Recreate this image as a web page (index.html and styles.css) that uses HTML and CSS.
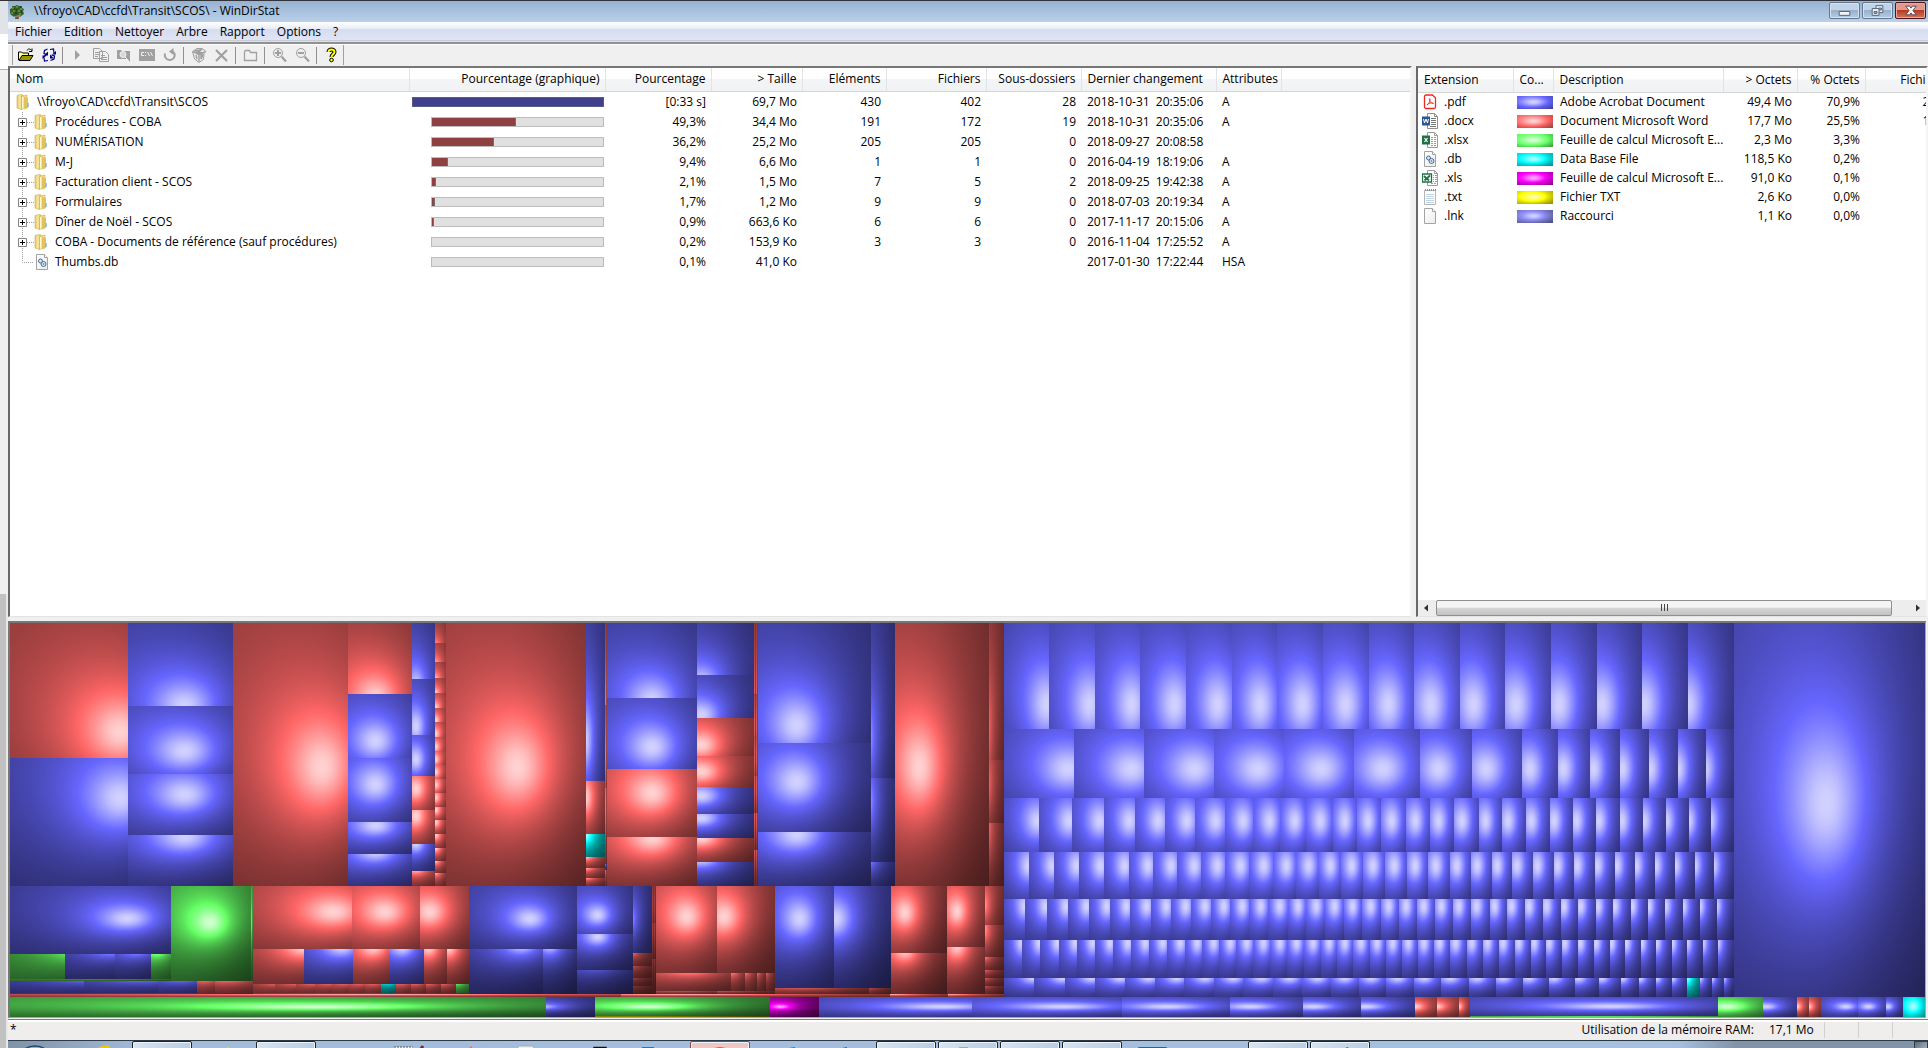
FILE: index.html
```html
<!DOCTYPE html>
<html lang="fr">
<head>
<meta charset="utf-8">
<title>\\froyo\CAD\ccfd\Transit\SCOS\ - WinDirStat</title>
<link rel="stylesheet" href="styles.css">
</head>
<body>
<svg class="defs" width="0" height="0" aria-hidden="true">
  <defs>
    <linearGradient id="gold" x1="0" x2="1"><stop offset="0" stop-color="#e3c662"/><stop offset=".5" stop-color="#f8e9a4"/><stop offset="1" stop-color="#d9b84e"/></linearGradient>
    <linearGradient id="sheet" x1="0" x2="1" y2="1"><stop offset="0" stop-color="#fff"/><stop offset="1" stop-color="#ececec"/></linearGradient>
    <symbol id="folder" viewBox="0 0 14 16">
      <path d="M1 1.500 5 .5 7 1v13l-1.500 1.500L1 14z" fill="url(#gold)" stroke="#cfae4d" stroke-width=".6"/>
      <path d="M5.500 2.500 11 1v12.500L5.500 15.500z" fill="#f5e39a" stroke="#c9a545" stroke-width=".6"/>
      <path d="M8 2.500 12 4v10l-4 1.500z" fill="#e2c25a"/>
      <path d="M6.500 3v11.500" stroke="#fff8d6"/>
      <path d="M12 9v4" stroke="#7db4dc" stroke-width="1.400"/>
    </symbol>
    <symbol id="doc-db" viewBox="0 0 16 16">
      <path d="M2.500.5h8l3 3v12h-11z" fill="url(#sheet)" stroke="#a3a3a3"/><path d="M10.500.5v3h3" fill="#fff" stroke="#a3a3a3"/>
      <circle cx="6.500" cy="7" r="2" fill="#dbe8f4" stroke="#3f6d9f"/><circle cx="9.500" cy="10" r="2.500" fill="#dbe8f4" stroke="#3f6d9f"/><circle cx="9.500" cy="10" r=".8" fill="#3f6d9f"/>
    </symbol>
    <symbol id="doc-pdf" viewBox="0 0 16 16">
      <path d="M4 1h6.500L13.500 4v9a1.500 1.500 0 0 1-1.500 1.500H4A1.500 1.500 0 0 1 2.500 13V2.500A1.500 1.500 0 0 1 4 1z" fill="#fff" stroke="#ee2a20" stroke-width="1.300"/>
      <path d="M5 11c2-1 3.500-4 3-6.300 -.8-.3-.8 1 0 2.500.6 1.300 1.800 2.500 3.200 2.400.8-.3-.2-1-1.700-.8C7.500 9 5.500 10 5 11z" fill="none" stroke="#ee2a20" stroke-width=".9"/>
    </symbol>
    <symbol id="doc-word" viewBox="0 0 16 16">
      <path d="M5.500.5h7l3 3v12h-10z" fill="#fff" stroke="#8f8f8f"/><path d="M12.500.5v3h3" fill="none" stroke="#8f8f8f"/>
      <path d="M9 5.500h5M9 7.500h5M9 9.500h5M9 11.500h5M8 13.500h6" stroke="#777"/>
      <path d="M0 3.500h8v9H0z" fill="#2a5699"/><path d="M1.500 6l1 4 1.500-4 1.500 4 1-4" fill="none" stroke="#fff"/>
    </symbol>
    <symbol id="doc-xlsx" viewBox="0 0 16 16">
      <path d="M5.500.5h7l3 3v12h-10z" fill="#fff" stroke="#9a9a9a"/><path d="M12.500.5v3h3" fill="none" stroke="#9a9a9a"/>
      <path d="M9 5.500h2m1 0h2M9 7.500h2m1 0h2M9 9.500h2m1 0h2M9 11.500h2m1 0h2M9 13.500h2m1 0h2" stroke="#6fb58c"/>
      <path d="M0 3.500h8v9H0z" fill="#1f7244"/><path d="M2.500 6l3 4m0-4-3 4" stroke="#fff" stroke-width="1.200"/>
    </symbol>
    <symbol id="doc-xls" viewBox="0 0 16 16">
      <path d="M5.500.5h7l3 3v12h-10z" fill="#fff" stroke="#9a9a9a"/><path d="M12.500.5v3h3" fill="none" stroke="#9a9a9a"/>
      <path d="M11 5.500h1m1 0h2M11 7.500h1m1 0h2M11 9.500h1m1 0h2M11 11.500h1m1 0h2M9 13.500h2m1 0h2" stroke="#6fb58c"/>
      <path d="M.5 4h9v8h-9z" fill="#fff" stroke="#1f7244" stroke-width="1.300"/><path d="M2 6l5 4.500M8 5.500 2.500 10.500" stroke="#1f7244" stroke-width="1.800"/>
    </symbol>
    <symbol id="doc-txt" viewBox="0 0 16 16">
      <path d="M2.500 1.500h11v14h-11z" fill="#fdfdfd" stroke="#b5b5b5"/><path d="M3 1h11" stroke="#8c8c8c" stroke-dasharray="1 1" stroke-width="2"/>
      <path d="M4 5.500h8M4 7.500h8M4 9.500h8M4 11.500h8M4 13.500h8" stroke="#c3d4e2"/>
    </symbol>
    <symbol id="doc-lnk" viewBox="0 0 16 16">
      <path d="M2.500.5h8l3 3v12h-11z" fill="url(#sheet)" stroke="#a3a3a3"/><path d="M10.500.5v3h3" fill="#fff" stroke="#a3a3a3"/>
    </symbol>
    <symbol id="toggle" viewBox="0 0 24 20">
      <path d="M12.500 0v20M17 10.500h7" stroke="#a0a0a0" stroke-dasharray="1 1"/>
      <path d="M8.500 6.500h8v8h-8z" fill="#fff" stroke="#848484"/><path d="M10 10.500h5M12.500 8v5" stroke="#000"/>
    </symbol>
    <symbol id="lens" viewBox="0 0 16 16">
      <circle cx="6" cy="6" r="4.500" fill="#eee" stroke="#a0a0a0"/><path d="M9.500 9.500l4.500 5" stroke="#a0a0a0" stroke-width="2.200"/><path d="M3 6h6" stroke="#a0a0a0" stroke-width="2"/>
    </symbol>
  </defs>
</svg>
<div class="desktop">
  <div class="behind"><div class="behind-tab"></div><div class="behind-page"></div><div class="behind-scroll"></div><div class="behind-thumb"></div></div>
  <div class="window">
    <header class="titlebar">
      <svg class="app-icon" viewBox="0 0 16 16"><path d="M7 8h2l1 7H6z" fill="#6b563b"/><path d="M4 12h2l1-2h2l1 2h2v1H4z" fill="#8c8468"/><path d="M1 5l2-1 0-2 3 0 2-1 2 1 3 0 0 2 2 1-1 2 1 3-3 2-3-1-2 1-3 0-2-1-1-2z" fill="#33602a"/><path d="M3 4h2m2-1h2m2 2h2M4 7h2m3 0h2M2 9h2m6 1h2" stroke="#7d8f47" stroke-width="1.500"/><path d="M5 5h1m5-2h1M7 6h1M6 9h2m4-1h1" stroke="#16340f" stroke-width="1.500"/></svg>
      <h1>\\froyo\CAD\ccfd\Transit\SCOS\ - WinDirStat</h1>
      <div class="window-buttons">
        <button aria-label="Réduire"><svg viewBox="0 0 30 15"><path d="M9.500 8.500h11v4h-11z" fill="#f4f4f4" stroke="#51617a"/></svg></button>
        <button aria-label="Restaurer"><svg viewBox="0 0 30 15"><path d="M13.500 2.500h7v7h-7z" fill="#f4f4f4" stroke="#51617a"/><path d="M16 5h3v2h-3z" fill="#9fb9d5" stroke="#51617a"/><path d="M9.500 5.500h7v7h-7z" fill="#f4f4f4" stroke="#51617a"/><path d="M11.500 8.500h3v2h-3z" fill="#9fb9d5" stroke="#51617a"/></svg></button>
        <button class="close" aria-label="Fermer"><svg viewBox="0 0 30 15"><path d="M10 3h4l1.500 2L17 3h4l-3.500 4.500L21 12h-4l-1.500-2-1.500 2h-4l3.500-4.500z" fill="#f4f4f4" stroke="#5a4a55"/></svg></button>
      </div>
    </header>
    <nav class="menubar">
      <button>Fichier</button><button>Edition</button><button>Nettoyer</button><button>Arbre</button><button>Rapport</button><button>Options</button><button>?</button>
    </nav>
    <div class="toolbar">
      <div class="tools">
        <button aria-label="Ouvrir"><svg viewBox="0 0 16 16"><path d="M.5 13V5h3l1 1h6v2" fill="#ffffa0" stroke="#000"/><path d="M1 13.500 4 8.500h11l-3 5z" fill="#9a9a00" stroke="#000"/><path d="M9 3.500c1-2 3-2 4.500 0M14 1.500v3h-3" fill="none" stroke="#000"/></svg></button>
        <button aria-label="Actualiser"><svg viewBox="0 0 16 16"><path d="M6.500 2 3.500 3.500 3 6.500 6 7.500M9 2.500l3.500-.5L13 6M9.500 13.500l3.500-1.500.5-3-3-1M7 13.500l-3.500.5L3 10.500" fill="none" stroke="#000080" stroke-width="1.200"/><path d="M7 4.500v4H3zM15 4v3.500h-4zM9 7.500v4h4zM1.500 12V8.500h4z" fill="#000080"/></svg></button>
        <span class="sep"></span>
        <button aria-label="Reprendre"><svg viewBox="0 0 16 16"><path d="M5 3l5 5-5 5z" fill="#a0a0a0"/></svg></button>
        <button aria-label="Copier"><svg viewBox="0 0 16 16"><path d="M.5 1.500h6l3 3v7h-9zM6.500 4.500h6l3 3v7h-9z" fill="#f0f0f0" stroke="#a0a0a0"/><path d="M2 5.500h4M2 7.500h4M2 9.500h3M8 8.500h4M8 10.500h6M8 12.500h6" stroke="#a0a0a0"/></svg></button>
        <button aria-label="Explorer"><svg viewBox="0 0 16 16"><path d="M1 3h4l1 1h8v11l-3-3H1z" fill="#a0a0a0"/><circle cx="7" cy="7.500" r="3" fill="#d8d8d8" stroke="#f0f0f0"/><path d="M9 10l4 4" stroke="#f0f0f0"/></svg></button>
        <button aria-label="Invite de commandes"><svg viewBox="0 0 16 16"><path d="M0 2h16v12H0z" fill="#a0a0a0"/><path d="M5 5.500H2.500v3H5M6.500 5v1m0 2v1M8.500 5l2 4m1-4 2 4" fill="none" stroke="#f0f0f0"/></svg></button>
        <button aria-label="Rafraîchir"><svg viewBox="0 0 16 16"><path d="M3 6.500a5 5 0 1 0 9.500 0L10 4" fill="none" stroke="#a0a0a0" stroke-width="2"/><path d="M7 4.500 11.500 1v7z" fill="#a0a0a0"/></svg></button>
        <span class="sep"></span>
        <button aria-label="Corbeille"><svg viewBox="0 0 16 16"><path d="M1.500 4.500 6 1.500l5 0 4 3-2 2-.5 6L8 15.500 3.500 12z" fill="#e8e8e8" stroke="#a0a0a0"/><path d="M2 4.500 8 7.500l6-2.500M8 7.500v7M5 8l1 4M4 3l4 2 3-3M10 8l2 0-2 4z" stroke="#a0a0a0" stroke-width="1.400" fill="#a0a0a0"/></svg></button>
        <button aria-label="Supprimer"><svg viewBox="0 0 16 16"><path d="M2 3l11 11M13 3 2 14" stroke="#a0a0a0" stroke-width="2.200"/></svg></button>
        <span class="sep"></span>
        <button aria-label="Dossier parent"><svg viewBox="0 0 16 16"><path d="M1.500 13.500v-9l1-1h4l1 2h6v8z" fill="#f0f0f0" stroke="#a0a0a0" stroke-width="1.300"/></svg></button>
        <span class="sep"></span>
        <button aria-label="Zoom avant"><svg viewBox="0 0 16 16"><use href="#lens"/><path d="M6 3v6" stroke="#a0a0a0" stroke-width="2"/></svg></button>
        <button aria-label="Zoom arrière"><svg viewBox="0 0 16 16"><use href="#lens"/></svg></button>
        <span class="sep"></span>
        <button aria-label="Aide"><svg viewBox="0 0 16 16"><path d="M4.500 5C4.500 1.500 10.500 1.500 10.500 5c0 2-3 2.500-3 5" fill="none" stroke="#000" stroke-width="4"/><path d="M4.500 5C4.500 1.500 10.500 1.500 10.500 5c0 2-3 2.500-3 5" fill="none" stroke="#ff0" stroke-width="2"/><circle cx="7.500" cy="13" r="1.800" fill="#ff0" stroke="#000"/></svg></button>
      </div>
    </div>
    <main class="panes">
      <section class="pane">
        <table class="list tree">
          <colgroup><col class="w-name"><col class="w-graph"><col class="w-pct"><col class="w-size"><col class="w-items"><col class="w-files"><col class="w-subs"><col class="w-date"><col class="w-attr"><col></colgroup>
          <thead><tr><th>Nom</th><th class="num">Pourcentage (graphique)</th><th class="num">Pourcentage</th><th class="num">&gt; Taille</th><th class="num">Eléments</th><th class="num">Fichiers</th><th class="num">Sous-dossiers</th><th>Dernier changement</th><th>Attributes</th><th></th></tr></thead>
          <tbody>
            <tr class="root"><td><div class="name"><svg class="folder"><use href="#folder"/></svg>\\froyo\CAD\ccfd\Transit\SCOS</div></td><td><div class="bar total"></div></td><td class="num">[0:33 s]</td><td class="num">69,7 Mo</td><td class="num">430</td><td class="num">402</td><td class="num">28</td><td>2018-10-31&nbsp; 20:35:06</td><td>A</td><td></td></tr>
            <tr><td><div class="name"><button class="toggle" aria-label="Développer"><svg><use href="#toggle"/></svg></button><svg class="folder"><use href="#folder"/></svg>Procédures - COBA</div></td><td><div class="bar"><i style="width:49.3%"></i></div></td><td class="num">49,3%</td><td class="num">34,4 Mo</td><td class="num">191</td><td class="num">172</td><td class="num">19</td><td>2018-10-31&nbsp; 20:35:06</td><td>A</td><td></td></tr>
            <tr><td><div class="name"><button class="toggle" aria-label="Développer"><svg><use href="#toggle"/></svg></button><svg class="folder"><use href="#folder"/></svg>NUMÉRISATION</div></td><td><div class="bar"><i style="width:36.2%"></i></div></td><td class="num">36,2%</td><td class="num">25,2 Mo</td><td class="num">205</td><td class="num">205</td><td class="num">0</td><td>2018-09-27&nbsp; 20:08:58</td><td></td><td></td></tr>
            <tr><td><div class="name"><button class="toggle" aria-label="Développer"><svg><use href="#toggle"/></svg></button><svg class="folder"><use href="#folder"/></svg>M-J</div></td><td><div class="bar"><i style="width:9.4%"></i></div></td><td class="num">9,4%</td><td class="num">6,6 Mo</td><td class="num">1</td><td class="num">1</td><td class="num">0</td><td>2016-04-19&nbsp; 18:19:06</td><td>A</td><td></td></tr>
            <tr><td><div class="name"><button class="toggle" aria-label="Développer"><svg><use href="#toggle"/></svg></button><svg class="folder"><use href="#folder"/></svg>Facturation client - SCOS</div></td><td><div class="bar"><i style="width:2.1%"></i></div></td><td class="num">2,1%</td><td class="num">1,5 Mo</td><td class="num">7</td><td class="num">5</td><td class="num">2</td><td>2018-09-25&nbsp; 19:42:38</td><td>A</td><td></td></tr>
            <tr><td><div class="name"><button class="toggle" aria-label="Développer"><svg><use href="#toggle"/></svg></button><svg class="folder"><use href="#folder"/></svg>Formulaires</div></td><td><div class="bar"><i style="width:1.7%"></i></div></td><td class="num">1,7%</td><td class="num">1,2 Mo</td><td class="num">9</td><td class="num">9</td><td class="num">0</td><td>2018-07-03&nbsp; 20:19:34</td><td>A</td><td></td></tr>
            <tr><td><div class="name"><button class="toggle" aria-label="Développer"><svg><use href="#toggle"/></svg></button><svg class="folder"><use href="#folder"/></svg>Dîner de Noël - SCOS</div></td><td><div class="bar"><i style="width:0.9%"></i></div></td><td class="num">0,9%</td><td class="num">663,6 Ko</td><td class="num">6</td><td class="num">6</td><td class="num">0</td><td>2017-11-17&nbsp; 20:15:06</td><td>A</td><td></td></tr>
            <tr><td><div class="name"><button class="toggle" aria-label="Développer"><svg><use href="#toggle"/></svg></button><svg class="folder"><use href="#folder"/></svg>COBA - Documents de référence (sauf procédures)</div></td><td><div class="bar"></div></td><td class="num">0,2%</td><td class="num">153,9 Ko</td><td class="num">3</td><td class="num">3</td><td class="num">0</td><td>2016-11-04&nbsp; 17:25:52</td><td>A</td><td></td></tr>
            <tr><td><div class="name"><svg class="branch" viewBox="0 0 24 20"><path d="M12.500 0v10.500H24" fill="none" stroke="#a0a0a0" stroke-dasharray="1 1"/></svg><svg class="file"><use href="#doc-db"/></svg>Thumbs.db</div></td><td><div class="bar"></div></td><td class="num">0,1%</td><td class="num">41,0 Ko</td><td></td><td></td><td></td><td>2017-01-30&nbsp; 17:22:44</td><td>HSA</td><td></td></tr>
          </tbody>
        </table>
      </section>
      <section class="pane">
        <div class="clip">
        <table class="list types">
          <colgroup><col class="w-ext"><col class="w-color"><col class="w-desc"><col class="w-bytes"><col class="w-share"><col class="w-count"></colgroup>
          <thead><tr><th>Extension</th><th>Co...</th><th>Description</th><th class="num">&gt; Octets</th><th class="num">% Octets</th><th class="num">Fichiers</th></tr></thead>
          <tbody>
            <tr><td><div class="ext"><svg><use href="#doc-pdf"/></svg>.pdf</div></td><td><canvas class="swatch" data-kind="b"></canvas></td><td>Adobe Acrobat Document</td><td class="num">49,4 Mo</td><td class="num">70,9%</td><td class="num">261</td></tr>
            <tr><td><div class="ext"><svg><use href="#doc-word"/></svg>.docx</div></td><td><canvas class="swatch" data-kind="r"></canvas></td><td>Document Microsoft Word</td><td class="num">17,7 Mo</td><td class="num">25,5%</td><td class="num">128</td></tr>
            <tr><td><div class="ext"><svg><use href="#doc-xlsx"/></svg>.xlsx</div></td><td><canvas class="swatch" data-kind="g"></canvas></td><td>Feuille de calcul Microsoft E...</td><td class="num">2,3 Mo</td><td class="num">3,3%</td><td></td></tr>
            <tr><td><div class="ext"><svg><use href="#doc-db"/></svg>.db</div></td><td><canvas class="swatch" data-kind="c"></canvas></td><td>Data Base File</td><td class="num">118,5 Ko</td><td class="num">0,2%</td><td></td></tr>
            <tr><td><div class="ext"><svg><use href="#doc-xls"/></svg>.xls</div></td><td><canvas class="swatch" data-kind="m"></canvas></td><td>Feuille de calcul Microsoft E...</td><td class="num">91,0 Ko</td><td class="num">0,1%</td><td></td></tr>
            <tr><td><div class="ext"><svg><use href="#doc-txt"/></svg>.txt</div></td><td><canvas class="swatch" data-kind="y"></canvas></td><td>Fichier TXT</td><td class="num">2,6 Ko</td><td class="num">0,0%</td><td></td></tr>
            <tr><td><div class="ext"><svg><use href="#doc-lnk"/></svg>.lnk</div></td><td><canvas class="swatch" data-kind="l"></canvas></td><td>Raccourci</td><td class="num">1,1 Ko</td><td class="num">0,0%</td><td></td></tr>
          </tbody>
        </table>
        </div>
        <div class="scrollbar">
          <button aria-label="Défiler à gauche"><svg viewBox="0 0 16 16"><path d="M10 4.500v7L6 8z" fill="#333"/></svg></button>
          <div class="thumb"><svg viewBox="0 0 9 8"><path d="M1.500 0v7M4.500 0v7M7.500 0v7" stroke="#444"/></svg></div>
          <button aria-label="Défiler à droite"><svg viewBox="0 0 16 16"><path d="M6 4.500v7L10 8z" fill="#333"/></svg></button>
        </div>
      </section>
    </main>
    <section class="map"><canvas id="treemap"></canvas></section>
    <footer class="statusbar"><span class="ready">*</span><span class="ram">Utilisation de la mémoire RAM:</span><span class="ram-value">17,1 Mo</span><span class="cell"></span><span class="cell"></span><span class="cell"></span></footer>
    <nav class="taskbar">
      <button aria-label="Démarrer"><svg viewBox="0 0 58 7"><ellipse cx="27" cy="16" rx="17" ry="15" fill="#8fb3cf" stroke="#1d4666" stroke-width="1.500"/></svg></button>
      <button aria-label="Internet Explorer"><svg viewBox="0 0 58 7"><path d="M22 8q8-7 18-6" stroke="#f2c21a" stroke-width="2.500" fill="none"/><path d="M25 8q6-4 14-3v3z" fill="#4a96d8"/></svg></button>
      <button class="open" aria-label="Chrome"><svg viewBox="0 0 58 7"><ellipse cx="29" cy="12" rx="12" ry="9" fill="#d2453b"/></svg></button>
      <button aria-label="Favoris"><svg viewBox="0 0 58 7"><path d="M18 7q4-6 9-2l-1 3z" fill="#1f62c0"/><path d="M29 8l5-7 3 7z" fill="#f7cf2c"/></svg></button>
      <button class="open" aria-label="Dossiers"><svg viewBox="0 0 58 7"><path d="M15 4h15v4H15z" fill="#c9ab55"/></svg></button>
      <button aria-label="Bureau à distance"><svg viewBox="0 0 58 7"><path d="M20 7l3-4h16l4 5z" fill="#5aafc4"/></svg></button>
      <button aria-label="Bloc-notes"><svg viewBox="0 0 58 7"><path d="M14 2h19v6H14z" fill="#f4f4f4"/><path d="M14 2h19" stroke="#555" stroke-dasharray="2 1"/><path d="M38 8l5-7" stroke="#7c2432" stroke-width="3"/></svg></button>
      <button aria-label="Dessin"><svg viewBox="0 0 58 7"><path d="M23 8l6-7 6 7z" fill="#ef6f72"/></svg></button>
      <button aria-label="Document"><svg viewBox="0 0 58 7"><path d="M14 1h15l4 7H14z" fill="#edf0f3" stroke="#aaa"/></svg></button>
      <button aria-label="Terminal"><svg viewBox="0 0 58 7"><path d="M28 2.500h12V8H28z" fill="#0b0b5a" stroke="#111" stroke-width="1.500"/></svg></button>
      <button aria-label="Réseau"><svg viewBox="0 0 58 7"><path d="M14 2h12v6H14z" fill="#1976d2"/><path d="M24 4h11v4H24z" fill="#52708f"/></svg></button>
      <button class="open alert" aria-label="Opera"><svg viewBox="0 0 58 7"><ellipse cx="29" cy="12" rx="13" ry="9" fill="#f6dede" stroke="#d8342f" stroke-width="1.500"/></svg></button>
      <button aria-label="Navigateur"><svg viewBox="0 0 58 7"><path d="M28 8l3-4 12-2v6z" fill="#1976d2"/></svg></button>
      <button aria-label="Courrier"><svg viewBox="0 0 58 7"><path d="M14 6l19-4v6H14z" fill="#2c5e9e"/></svg></button>
      <button class="open" aria-label="Notes"><svg viewBox="0 0 58 7"><path d="M22 8l4-5 5 5z" fill="#8fbf5a"/></svg></button>
      <button class="open" aria-label="Images"><svg viewBox="0 0 58 7"><path d="M20 3h9v5H20z" fill="#fff" stroke="#777"/><circle cx="37" cy="9" r="5" fill="#4c93a8"/></svg></button>
      <button class="open" aria-label="Outlook"><svg viewBox="0 0 58 7"><path d="M14 5l18-2v5H14z" fill="#1374c8"/></svg></button>
      <button class="open" aria-label="Transferts"><svg viewBox="0 0 58 7"><path d="M15 8l4-5 5 5z" fill="#f2a23c"/></svg></button>
      <button aria-label="Outils"><svg viewBox="0 0 58 7"><rect x="13" y="2" width="31" height="9" rx="3" fill="#2f618f"/></svg></button>
      <span class="spare"></span>
      <button class="open" aria-label="Écran"><svg viewBox="0 0 58 7"><path d="M16 4h20l2 4H16z" fill="#23238a"/><path d="M22 4h18v4H30z" fill="#d6dbe2"/></svg></button>
      <button class="open" aria-label="WinDirStat"><svg viewBox="0 0 58 7"><path d="M22 7l3-4 6 1 6-2 3 6z" fill="#4c6a34"/></svg></button>
      <span class="tray"></span>
      <button class="show-desktop" aria-label="Afficher le bureau"></button>
    </nav>
  </div>
</div>
<script src="script.js"></script>
</body>
</html>
```
FILE: styles.css
```css
* { box-sizing: border-box; }
body { margin: 0; background: #f0f0f0; color: #000; font: 12px/16px "Open Sans", "Noto Sans", sans-serif; }
button { margin: 0; padding: 0; border: 0; background: none; font: inherit; color: inherit; }
svg { display: block; }
.defs { position: absolute; }

.desktop { display: flex; height: 100vh; overflow: hidden; }
.behind { flex: 0 0 8px; display: flex; flex-direction: column; background: #f0f0f0; }
.behind-tab { height: 34px; background: #e0e4e9; border-top: 1px solid #333; }
.behind-page { height: 36px; background: #fff; border-bottom: 1px solid #b0b0b0; }
.behind-scroll { height: 524px; background: #f0f0f0; }
.behind-thumb { flex: 1; background: #c1c1c1; border-right: 2px solid #e8e8e8; }
.window { flex: 1; min-width: 0; display: flex; flex-direction: column; }

.titlebar { flex: none; height: 22px; display: flex; align-items: center; border-top: 1px solid #30343a; background: linear-gradient(#97b2d2, #b9d1ea); }
.app-icon { width: 16px; height: 16px; margin-left: 1px; }
.titlebar h1 { flex: 1; margin: 0 0 0 9px; font-size: 12px; line-height: 20px; padding-bottom: 1px; font-weight: 400; }
.window-buttons { display: flex; gap: 2px; padding-right: 2px; align-self: flex-start; }
.window-buttons button { width: 31px; height: 17px; margin-top: 1px; border: 1px solid #66788f; border-radius: 2px; box-shadow: inset 0 0 0 1px #d3e1ef; background: linear-gradient(#c0d3e7 45%, #97b1cc 50%, #b4cde4); }
.window-buttons .close { border-color: #4a1420; box-shadow: inset 0 0 0 1px #e8a99e; background: linear-gradient(#e0998b 45%, #b83a22 50%, #d0765b); }
.window-buttons svg { width: 29px; height: 15px; }

.menubar { flex: none; height: 22px; display: flex; align-items: center; padding: 0 0 2px 1px; background: linear-gradient(#fff, #e9edf7 30%, #d5dcef 32%, #dfe5f5 80%, #b1b9cb 82%, #eee 88%, #909090 92%, #909090); }
.menubar button { padding: 0 6px; }

.toolbar { flex: none; height: 22px; padding-left: 4px; background: #f0f0f0; border-top: 1px solid #fff; }
.tools { display: inline-flex; align-items: center; height: 20px; padding: 0 0 0 1px; border: solid #a0a0a0; border-width: 0 1px; }
.tools button { width: 23px; height: 20px; display: grid; place-items: center; }
.tools svg { width: 16px; height: 16px; }
.tools .sep { width: 6px; height: 17px; background: linear-gradient(90deg, transparent 2px, #909090 2px, #909090 3px, transparent 3px); }

.panes { flex: 1; min-height: 0; display: grid; grid-template-columns: minmax(0, 1fr) 512px; gap: 4px; }
.pane { display: flex; flex-direction: column; min-width: 0; overflow: hidden; background: #fff; border: 2px solid #696969; border-top-color: #777; border-right: 2px solid #f4f4f4; border-bottom: 1px solid #e3e3e3; }
.clip { flex: 1; overflow: hidden; }
.list { border-collapse: collapse; table-layout: fixed; white-space: nowrap; }
.tree { width: 100%; }
.types { width: 530px; }
.list th { height: 24px; padding: 0 6px; font-weight: 400; text-align: left; border-right: 1px solid #e0e3e8; border-bottom: 1px solid #d5d5d5; background: linear-gradient(#fff 45%, #f3f4f5 50%, #f1f2f4); }
.tree th { height: 23px; }
.list th:last-child { border-right: 0; }
.list td { height: 20px; padding: 0 6px; }
.types td { height: 19px; padding-left: 7px; }
.list .num { padding-right: 5px; text-align: right; }
.w-name { width: 399px; } .w-graph { width: 196px; } .w-pct { width: 106px; } .w-size { width: 91px; }
.w-items { width: 84px; } .w-files { width: 100px; } .w-subs { width: 95px; } .w-date { width: 135px; } .w-attr { width: 65px; }
.w-ext { width: 95px; } .w-color { width: 40px; } .w-desc { width: 170px; } .w-bytes { width: 74px; }
.w-share { width: 68px; } .w-count { width: 83px; }
.list td:first-child, .types td:nth-child(2) { padding: 0 0 0 4px; }
.tree td:first-child { padding: 0; }
.name, .ext { display: flex; align-items: center; height: 20px; }
.ext { height: 19px; gap: 6px; }
.ext svg, .file { width: 16px; height: 16px; }
.file { margin-right: 5px; }
.root .name { padding-left: 6px; }
.folder { width: 14px; height: 16px; margin-right: 7px; }
.toggle svg, .branch, .toggle { width: 24px; height: 20px; }
.bar { height: 10px; margin-left: 16px; border: 1px solid #bcbcbc; background: #e0e0e0; }
.list td:nth-child(2) { padding-right: 0; }
.tree td:nth-child(2) { padding: 0 1px 0 6px; }
.bar i { display: block; height: 8px; border-right: 1px solid #707070; background: #8f4141; }
.bar.total { margin-left: -3px; background: #40408f; border-color: #5b5b80; }
.swatch { display: block; width: 36px; height: 13px; }

.scrollbar { flex: none; height: 16px; display: flex; background: #ededed; }
.scrollbar button, .scrollbar svg { width: 16px; height: 16px; }
.thumb { flex: 1; margin: 0 18px 0 2px; display: grid; place-items: center; border: 1px solid #8f8f8f; border-radius: 2px; background: linear-gradient(#f4f4f4 45%, #d6d6d6 50%, #c2c2c2); }
.thumb svg { width: 9px; height: 8px; }

.map { flex: none; margin: 4px 2px 0 0; border-top: 2px solid #777; border-left: 2px solid #777; border-right: 1px solid #a8a8a8; border-bottom: 1px solid #a8a8a8; }
#treemap { display: block; width: 100%; height: 394px; }

.statusbar { flex: none; display: flex; align-items: center; height: 21px; margin-top: 1px; padding-right: 2px; background: #f0eded; border-top: 1px solid #808080; box-shadow: inset 0 2px #fff; }
.ready { flex: 1; padding-left: 2px; }
.ram-value { width: 70px; padding-left: 15px; }
.cell { width: 34px; height: 16px; border-left: 1px solid #d0d0d0; }

.taskbar { flex: none; height: 8px; display: flex; gap: 2px; overflow: hidden; border-top: 1px solid #2c3947; background: linear-gradient(90deg, #7f92a6, #a3bcda 7%, #a6c0df 87%, #8193a8 90%); }
.taskbar button { flex: none; width: 60px; height: 14px; }
.taskbar .open { border: 1px solid #1c242e; border-radius: 2px; box-shadow: inset 0 0 0 1px #eef4fa; background: linear-gradient(90deg, #d6e3f0, #b9cde4); }
.taskbar .alert { border-color: #7d4b50; background: #efc6c6; }
.taskbar svg { width: 58px; height: 7px; }
.spare { width: 60px; }
.tray { flex: 1; }
.taskbar .show-desktop { width: 14px; background: linear-gradient(135deg, #5d6b79, #b8c4d0); border: 1px solid #333c46; }
```
FILE: script.js
```js
// Cushion treemap: each node adds a parabolic ridge to the surface it inherits,
// and each leaf is lit from the upper left.
const COLORS = {
  b: [102, 102, 255], r: [255, 102, 102], g: [102, 255, 102],
  c: [0, 229, 229], m: [229, 0, 229], y: [229, 229, 0], l: [124, 124, 211]
};
const HEIGHT = 0.38, SCALE = 0.91, AMBIENT = 0.13, GAIN = 0.88 / 0.6;
const NORM = Math.sqrt(102), LIGHT = [-1 / NORM, -1 / NORM, 10 / NORM];

const leaves = text => text.split(" ").map(s => [parseInt(s, 10), s.slice(-1)]);
const make = axis => (...items) => ({ axis, items: typeof items[0] === "string" ? leaves(items[0]) : items });
const across = make("x");
const down = make("y");
const folder = inner => ({ folder: inner });
const same = (kind, sizes) => across(sizes.split(" ").map(n => n + kind).join(" "));

const procedures = down(
  [263, across(
    [223, folder(across([118, down("135r 128b")], [105, down("83b 68b 61b 51b")]))],
    [213, folder(across([115, "r"], [64, down("71r 64b 64b 32b 32b")],
      [23, down("56b 56b 41b 34r 34r 27b 15r")],
      [11, down("20r 19r 16r 15r 15r 14r 15r 14r 14r 14r 14r 14r 13r 14r 14r 13r 12r 13r")]))],
    [161, folder(across([140, "r"], [19, down("158b 53r 23c 11r 10r 8r")], [2, down("82r 83r 76r 6b 16r")]))],
    [151, folder(across([90, down("75b 71b 68r 49r")], [57, down("52b 43b 38r 31r 27b 24b 24r 24b")],
      [2, down("71r 42r 40r 37r 37r 36r")], [2, down("71r 42r 40r 37r 37r 36r")]))],
    [137, folder(across([113, down("120b 89b 54b")], [24, down("155b 84b 24b")]))],
    [109, folder(across([94, "r"], [15, down("137r 63r 63r")]))])],
  [108, across(
    [243, folder(down(
      [95, across(
        [161, folder(down([68, "b"], [25, across("55g 50b 36b 20g")], [2, "g"]))],
        [82, folder(across("80g 2g"))])],
      [12, across("74b 74b 39b 18r 38r")], [1, "b"]))],
    [216, folder(down([63, across("99r 68r 49r")], [35, across("51r 49b 36r 35b 23r 22r")],
      [9, across("22r 21r 19r 17r 17r 16r 16r 15c 15r 15r 15r 15r 13g")], [1, "r"]))],
    [187, folder(across(
      [108, folder(down([63, "b"], [45, across("74b 34b")]))],
      [79, folder(across([56, down("48b 36b 24b")], [19, down("67b 13r 12r 8r 8r")],
        [2, down("37r 36r 35r")], [2, down("37r 36r 35r")]))]))],
    [119, folder(down([87, across("61r 58r")], [18, across("75r 14r 12r 9r 9r")], [3, across("61r 58r")]))],
    [116, folder(down([102, across("59b 57b")], [6, across("94r 22r")]))],
    [56, folder(down("67r 41r"))],
    [57, folder(across([38, down("61r 47r")], [19, down("39r 32r 13r 8r 8r 8r")]))])],
  [3, across("611r 269r 58r 56r")]);

const scans = down(
  [106, same("b", "45 46 45 46 46 45 46 46 45 46 45 46 46 45 46 46")],
  [69, same("b", "70 70 70 70 70 66 52 50 36 32 30 29 29 28 28")],
  [54, same("b", "35 33 32 31 30 30 30 28 27 26 27 24 24 25 24 24 25 23 24 24 23 23 24 23 23 23 22 23")],
  [47, same("b", "25 25 25 25 25 24 24 24 24 24 24 23 23 22 22 22 22 21 22 21 21 20 21 21 20 21 20 20 20 20 20 19 20")],
  [41, same("b", "21 22 21 21 21 20 21 20 20 20 19 19 19 20 18 19 19 18 19 18 18 18 18 18 19 17 18 18 18 17 18 17 18 17 17 18 17 17 17")],
  [38, same("b", "18 18 19 18 18 18 18 18 18 18 17 17 17 17 17 17 17 17 16 16 17 16 16 16 16 16 17 16 16 16 16 15 16 16 16 16 15 16 15 16 15 16 15 16")],
  [19, across("30b 31b 30b 30b 30b 29b 30b 29b 30b 29b 29b 28b 27b 28b 27b 28b 27b 27b 26b 26b 24b 22b 18b 17b 16b 15b 13c 12b 12b 10b")]);

const root = down(
  [374, across([994, folder(procedures)], [730, folder(scans)], [191, folder("b")])],
  [20, across(
    [809, folder(across([585, folder(across("536g 49b"))], [175, folder(down("19g 1y"))], [49, folder("m")]))],
    [651, folder(across("153b 150b 108b 73b 58b 54b 22r 22r 11r"))],
    [351, folder(across([248, down("19b 1g")], [45, "g"], [34, "b"], [12, "r"], [12, "r"]))],
    [82, folder(across("37b 28b 17b"))],
    [22, "c"])]);

function addRidge(rect, surface, h) {
  const [l, t, r, b] = rect, s = surface.slice();
  const wf = 4 * h / (r - l), hf = 4 * h / (b - t);
  s[2] += wf * (r + l); s[0] -= wf;
  s[3] += hf * (b + t); s[1] -= hf;
  return s;
}

function shade(image, rect, s, kind) {
  const [l, t, r, b] = rect, color = COLORS[kind];
  for (let y = t; y < b; y++) {
    for (let x = l; x < r; x++) {
      const nx = -(2 * s[0] * (x + 0.5) + s[2]);
      const ny = -(2 * s[1] * (y + 0.5) + s[3]);
      const cos = (nx * LIGHT[0] + ny * LIGHT[1] + LIGHT[2]) / Math.sqrt(nx * nx + ny * ny + 1);
      const pixel = (Math.max(0, (1 - AMBIENT) * Math.min(1, cos)) + AMBIENT) * GAIN;
      const rgb = color.map(c => c * pixel);
      // light beyond full intensity spills over to the other channels
      let excess = 0, open = [];
      rgb.forEach((v, i) => { if (v > 255) { excess += v - 255; rgb[i] = 255; } else open.push(i); });
      open.forEach(i => { rgb[i] = Math.min(255, rgb[i] + excess / open.length); });
      image.data.set([rgb[0], rgb[1], rgb[2], 255], (y * image.width + x) * 4);
    }
  }
}

function draw(image, node, rect, surface, h) {
  const [l, t, r, b] = rect;
  if (r <= l || b <= t) return;
  if (typeof node === "string") {
    shade(image, rect, addRidge(rect, surface, h), node);
  } else if (node.folder) {
    draw(image, node.folder, rect, addRidge(rect, surface, h), h * SCALE);
  } else {
    const total = node.items.reduce((sum, item) => sum + item[0], 0);
    const start = node.axis === "x" ? l : t, span = node.axis === "x" ? r - l : b - t;
    let used = 0;
    for (const [size, child] of node.items) {
      const from = start + Math.round(span * used / total);
      used += size;
      const to = start + Math.round(span * used / total);
      draw(image, child, node.axis === "x" ? [from, t, to, b] : [l, from, r, to], surface, h);
    }
  }
}

function paint(canvas, node) {
  const width = canvas.width = canvas.clientWidth, height = canvas.height = canvas.clientHeight;
  const context = canvas.getContext("2d"), image = context.createImageData(width, height);
  draw(image, node, [0, 0, width, height], [0, 0, 0, 0], HEIGHT * SCALE);
  context.putImageData(image, 0, 0);
}

function paintAll() {
  paint(document.getElementById("treemap"), root);
  document.querySelectorAll(".swatch").forEach(c => paint(c, c.dataset.kind));
}
paintAll();
window.addEventListener("resize", paintAll);
```
